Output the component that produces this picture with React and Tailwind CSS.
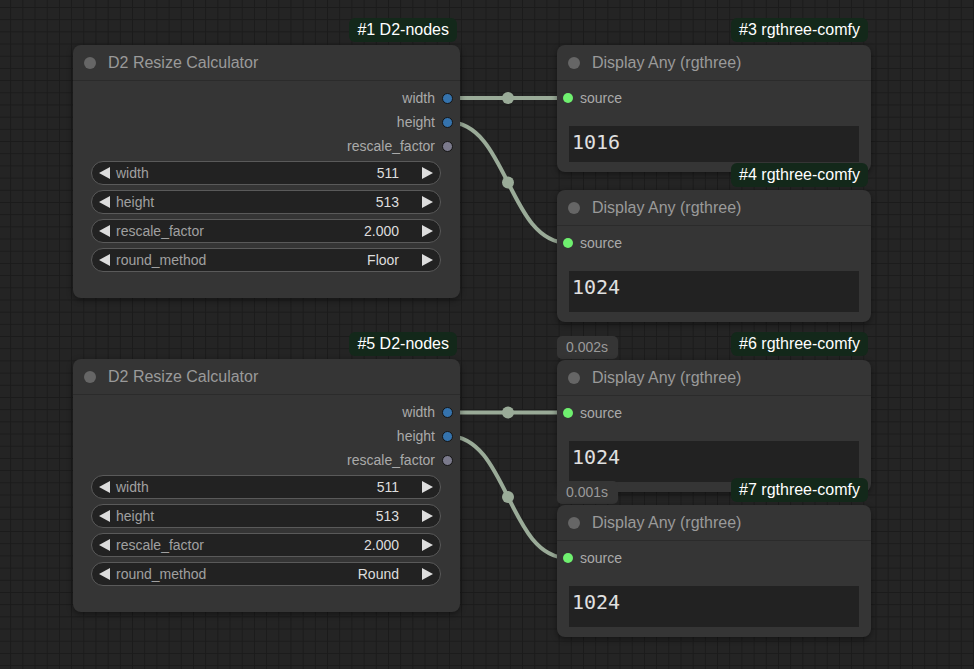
import React from "react";

const FONT = "font-['Liberation_Sans',Arial,sans-serif]";

function LeftArrow() {
  return (
    <svg width="11" height="12" viewBox="0 0 11 12" className="shrink-0">
      <polygon points="11,0 11,12 0,6" fill="#dddddd" />
    </svg>
  );
}
function RightArrow() {
  return (
    <svg width="11" height="12" viewBox="0 0 11 12" className="shrink-0">
      <polygon points="0,0 0,12 11,6" fill="#dddddd" />
    </svg>
  );
}

function Widget({ label, value }) {
  return (
    <div className="h-[24px] rounded-full border border-[#5a5a5a] bg-[#222222] flex items-center pl-[7px] pr-[7px] text-[14px]">
      <LeftArrow />
      <span className="ml-[6px] text-[#a0a0a0]">{label}</span>
      <span className="ml-auto mr-[23px] text-[#dddddd]">{value}</span>
      <RightArrow />
    </div>
  );
}

function Output({ label, color }) {
  return (
    <div className="h-[24px] flex items-center justify-end pr-[7px] gap-[7px] text-[14px] text-[#aaaaaa]">
      <span>{label}</span>
      <span className={`w-[11px] h-[11px] rounded-full border border-[#151515] ${color}`} />
    </div>
  );
}

function TitleBar({ title }) {
  return (
    <div className="h-[36px] flex items-center pl-[11px] pt-[1px] border-b border-[#2b2b2b]">
      <span className="w-[12px] h-[12px] rounded-full bg-[#666666]" />
      <span className="ml-[12px] text-[16px] text-[#9a9a9a]">{title}</span>
    </div>
  );
}

function ResizeNode({ pos, method }) {
  return (
    <div className={`absolute ${pos} w-[387px] h-[253px] rounded-[8px] bg-[#353535] shadow-[0_2px_6px_rgba(0,0,0,0.45)]`}>
      <TitleBar title="D2 Resize Calculator" />
      <div className="pt-[5px]">
        <Output label="width" color="bg-[#3573ad]" />
        <Output label="height" color="bg-[#3573ad]" />
        <Output label="rescale_factor" color="bg-[#7b7a8c]" />
      </div>
      <div className="mt-[3px] ml-[18px] mr-[19px] flex flex-col gap-[5px]">
        <Widget label="width" value="511" />
        <Widget label="height" value="513" />
        <Widget label="rescale_factor" value="2.000" />
        <Widget label="round_method" value={method} />
      </div>
    </div>
  );
}

function DisplayNode({ pos, value, boxH }) {
  return (
    <div className={`absolute ${pos} w-[314px] rounded-[8px] bg-[#353535] pb-[10px] shadow-[0_2px_6px_rgba(0,0,0,0.45)]`}>
      <TitleBar title="Display Any (rgthree)" />
      <div className="pt-[5px]">
        <div className="h-[24px] flex items-center pl-[6px] gap-[7px] text-[14px] text-[#aaaaaa]">
          <span className="w-[10px] h-[10px] rounded-full bg-[#6ff06f]" />
          <span>source</span>
        </div>
      </div>
      <div className={`mt-[16px] mx-[12px] ${boxH} bg-[#222222] pl-[3px] pt-[4px] leading-[24px] font-['DejaVu_Sans_Mono',monospace] text-[20px] text-[#e0e0e0]`}>
        {value}
      </div>
    </div>
  );
}

function Badge({ pos, text }) {
  return (
    <div className={`absolute ${pos} h-[24px] px-[8px] flex items-center rounded-[6px] bg-[#13281a] text-[16px] text-white`}>
      {text}
    </div>
  );
}

function Tab({ pos, text }) {
  return (
    <div className={`absolute ${pos} w-[61px] h-[23px] pl-[9px] flex items-center rounded-[5px] bg-[#353535] text-[14px] text-[#9a9a9a]`}>
      {text}
    </div>
  );
}

function Links() {
  const c = "#9aab98";
  return (
    <svg className="absolute left-0 top-0" width="974" height="669">
      <path d="M448 98 L568 98" stroke={c} strokeWidth="4" fill="none" />
      <circle cx="508" cy="98" r="6" fill={c} />
      <path d="M448 122 C508 122, 508 243, 568 243" stroke={c} strokeWidth="4" fill="none" />
      <circle cx="508" cy="182.5" r="6" fill={c} />
      <path d="M448 412.5 L568 412.5" stroke={c} strokeWidth="4" fill="none" />
      <circle cx="508" cy="412.5" r="6" fill={c} />
      <path d="M448 436 C508 436, 508 558, 568 558" stroke={c} strokeWidth="4" fill="none" />
      <circle cx="508" cy="497" r="6" fill={c} />
    </svg>
  );
}

export default function App() {
  return (
    <div
      className={`relative w-[974px] h-[669px] overflow-hidden bg-[#242424] bg-[linear-gradient(#1b1b1b_1px,transparent_1px),linear-gradient(90deg,#1b1b1b_1px,transparent_1px)] bg-[size:12.2px_12.2px] bg-[position:-2px_7px] ${FONT}`}
    >
      <Links />

      <ResizeNode pos="left-[73px] top-[45px]" method="Floor" />
      <ResizeNode pos="left-[73px] top-[359px]" method="Round" />

      <DisplayNode pos="left-[557px] top-[45px]" value="1016" boxH="h-[36px]" />
      <DisplayNode pos="left-[557px] top-[190px]" value="1024" boxH="h-[41px]" />
      <Tab pos="left-[557px] top-[336px]" text="0.002s" />
      <DisplayNode pos="left-[557px] top-[360px]" value="1024" boxH="h-[41px]" />
      <Tab pos="left-[557px] top-[481px]" text="0.001s" />
      <DisplayNode pos="left-[557px] top-[505px]" value="1024" boxH="h-[41px]" />

      <Badge pos="right-[517px] top-[18px]" text="#1 D2-nodes" />
      <Badge pos="right-[106px] top-[18px]" text="#3 rgthree-comfy" />
      <Badge pos="right-[106px] top-[163px]" text="#4 rgthree-comfy" />
      <Badge pos="right-[517px] top-[332px]" text="#5 D2-nodes" />
      <Badge pos="right-[106px] top-[332px]" text="#6 rgthree-comfy" />
      <Badge pos="right-[106px] top-[478px]" text="#7 rgthree-comfy" />
    </div>
  );
}
